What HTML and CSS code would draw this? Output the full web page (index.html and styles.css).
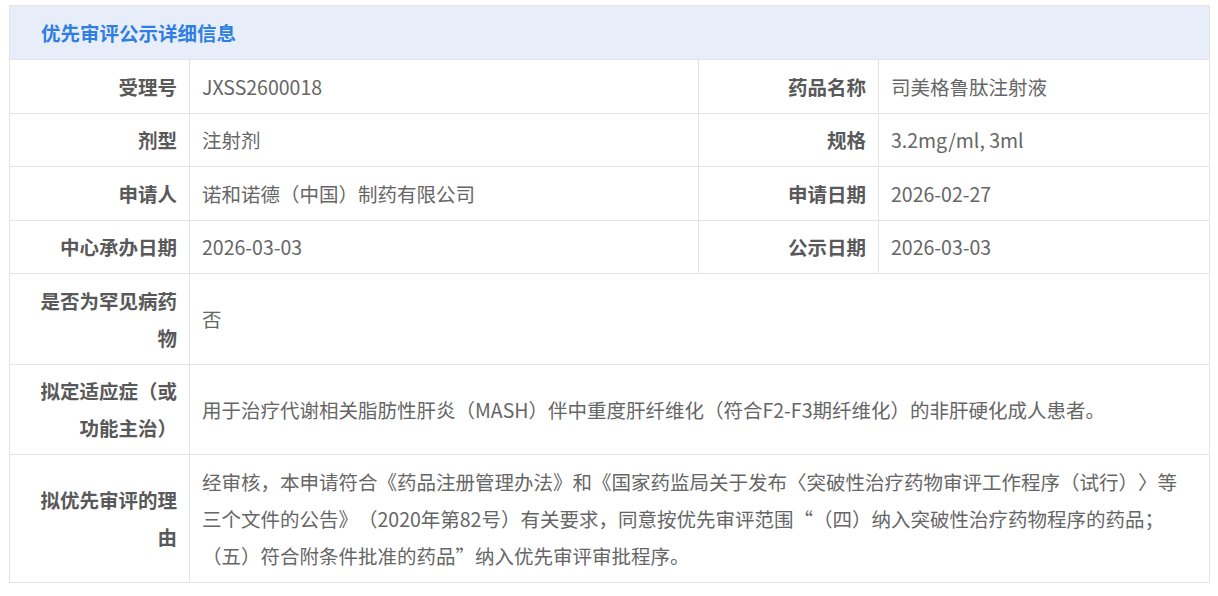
FILE: index.html
```html
<!DOCTYPE html>
<html lang="zh-CN">
<head>
<meta charset="utf-8">
<title>优先审评公示详细信息</title>
<link rel="stylesheet" href="styles.css">
</head>
<body>
<div class="wrap">
  <table class="detail">
    <colgroup>
      <col class="c-label">
      <col class="c-value">
      <col class="c-label">
      <col class="c-value2">
    </colgroup>
    <thead>
      <tr><th colspan="4" class="title">优先审评公示详细信息</th></tr>
    </thead>
    <tbody>
      <tr>
        <td class="label">受理号</td><td class="value">JXSS2600018</td>
        <td class="label">药品名称</td><td class="value">司美格鲁肽注射液</td>
      </tr>
      <tr>
        <td class="label">剂型</td><td class="value">注射剂</td>
        <td class="label">规格</td><td class="value">3.2mg/ml, 3ml</td>
      </tr>
      <tr>
        <td class="label">申请人</td><td class="value">诺和诺德（中国）制药有限公司</td>
        <td class="label">申请日期</td><td class="value">2026-02-27</td>
      </tr>
      <tr>
        <td class="label">中心承办日期</td><td class="value">2026-03-03</td>
        <td class="label">公示日期</td><td class="value">2026-03-03</td>
      </tr>
      <tr>
        <td class="label">是否为罕见病药物</td><td class="value" colspan="3">否</td>
      </tr>
      <tr>
        <td class="label">拟定适应症（或功能主治）</td><td class="value" colspan="3">用于治疗代谢相关脂肪性肝炎（MASH）伴中重度肝纤维化（符合F2-F3期纤维化）的非肝硬化成人患者。</td>
      </tr>
      <tr>
        <td class="label">拟优先审评的理由</td><td class="value" colspan="3">经审核，本申请符合《药品注册管理办法》和《国家药监局关于发布〈突破性治疗药物审评工作程序（试行）〉等三个文件的公告》（2020年第82号）有关要求，同意按优先审评范围“（四）纳入突破性治疗药物程序的药品；（五）符合附条件批准的药品”纳入优先审评审批程序。</td>
      </tr>
    </tbody>
  </table>
</div>
</body>
</html>
```

FILE: styles.css
```css
html, body {
  margin: 0;
  padding: 0;
  background: #ffffff;
}

body {
  font-family: "Noto Sans CJK SC", "Noto Sans", sans-serif;
  font-size: 19.5px;
  color: #666666;
  text-spacing-trim: space-all;
}

.wrap {
  padding: 5px 9px;
}

.detail {
  width: 1200px;
  border-collapse: collapse;
  table-layout: fixed;
  border: 1px solid #e4e4e4;
}

.c-label { width: 180px; }
.c-value { width: 509px; }
.c-value2 { width: 331px; }

.detail th,
.detail td {
  border: 1px solid #e4e4e4;
  line-height: 37px;
  padding-top: 7.75px;
  padding-bottom: 7.75px;
  vertical-align: middle;
}

.detail .title {
  background: #e7eef9;
  color: #2f7ee0;
  font-weight: bold;
  text-align: left;
  padding: 8px 0 8px 31px;
  line-height: 37px;
}

.detail .label {
  text-align: right;
  font-weight: bold;
  color: #595959;
  padding-left: 20px;
  padding-right: 12px;
}

.detail .value {
  text-align: left;
  padding-left: 12px;
  padding-right: 16px;
}
```
